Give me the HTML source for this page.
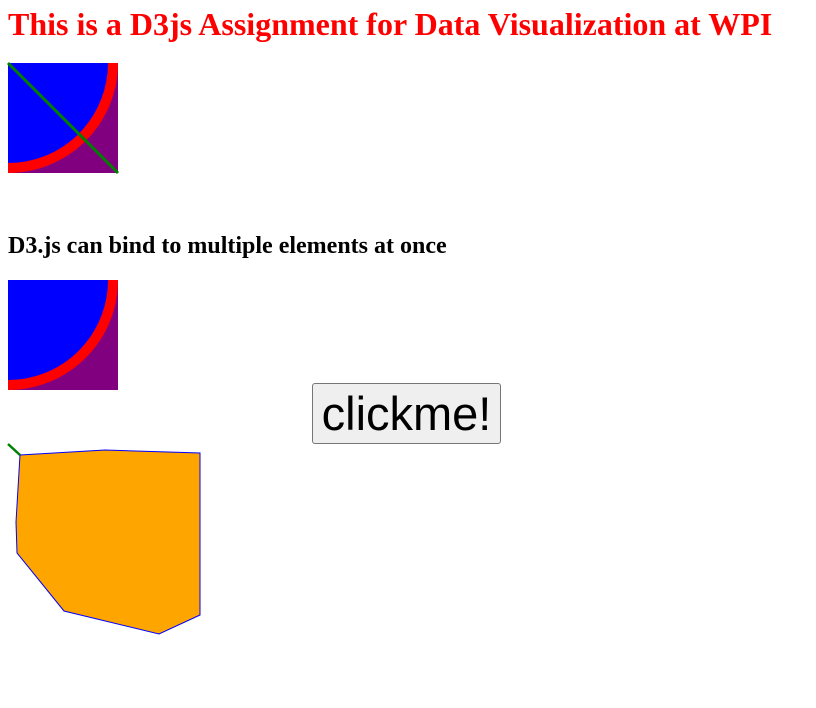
<!DOCTYPE html>
<html><head><style>
body{margin:0;background:#fff;width:816px;height:708px;overflow:hidden;position:relative}
h1{position:absolute;left:8px;top:4px;margin:0;font:bold 32px/40px "Liberation Serif",serif;color:red;white-space:nowrap}
h3{position:absolute;left:8px;top:231px;margin:0;font:bold 24px/30px "Liberation Serif",serif;color:#000;white-space:nowrap}
svg{position:absolute;left:0;top:0}
button{position:absolute;left:312px;top:383px;width:189px;height:61px;box-sizing:border-box;border:1px solid #767676;border-radius:3px;background:#efefef;font:47px/54px "Liberation Sans",sans-serif;color:#000;padding:0;margin:0}
</style></head><body>
<h1>This is a D3js Assignment for Data Visualization at WPI</h1>
<h3>D3.js can bind to multiple elements at once</h3>
<svg width="816" height="708">
<defs><clipPath id="c1"><rect x="8" y="63" width="110" height="110"/></clipPath>
<clipPath id="c2"><rect x="8" y="280" width="110" height="110"/></clipPath></defs>
<rect x="8" y="63" width="110" height="110" fill="purple"/>
<circle cx="8" cy="63" r="105" fill="blue" stroke="red" stroke-width="10" clip-path="url(#c1)"/>
<line x1="8" y1="63" x2="118" y2="173" stroke="green" stroke-width="3"/>
<rect x="8" y="280" width="110" height="110" fill="purple"/>
<circle cx="8" cy="280" r="105" fill="blue" stroke="red" stroke-width="10" clip-path="url(#c2)"/>
<polygon points="20,455 105,450 200,453 200,615 159,634 64,611 17,553 16,522" fill="orange" stroke="blue" stroke-width="1"/>
<line x1="8" y1="444" x2="20" y2="455" stroke="green" stroke-width="2.5"/>
</svg>
<button>clickme!</button>
</body></html>
